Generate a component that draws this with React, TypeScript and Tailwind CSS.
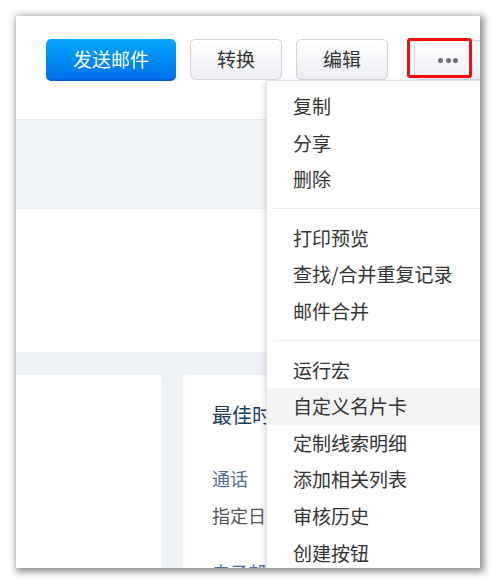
import React from "react";

const font = { fontFamily: '"Noto Sans CJK SC", "Noto Sans", sans-serif' };

function MenuItem({ label, active }: { label: string; active?: boolean }) {
  return (
    <div
      className={`h-[36.6px] flex items-center pl-[26px] text-[19px] text-[#333333] ${
        active ? "bg-[#f4f4f4]" : ""
      }`}
    >
      {label}
    </div>
  );
}

function Divider() {
  return <div className="mx-[6px] mt-[10px] mb-[11px] h-px bg-[#e8e8e8]" />;
}

export default function App() {
  return (
    <div className="w-[496px] h-[584px] bg-white p-4" style={font}>
      <div className="relative w-[464px] h-[552px] overflow-hidden bg-white shadow-[2px_2px_7px_2px_rgba(0,0,0,0.45)]">
        {/* header */}
        <div className="h-[103px] flex items-start pt-[23px] pl-[30px]">
          <button className="shrink-0 w-[130px] h-[42px] rounded-[5px] bg-gradient-to-b from-[#0ba6fc] to-[#0071ea] border-b-2 border-[#0062cc] text-white text-[19px] flex items-center justify-center">
            发送邮件
          </button>
          <button className="shrink-0 ml-[14px] w-[92px] h-[41px] rounded-[5px] bg-gradient-to-b from-[#ffffff] to-[#ebedf3] border border-[#cfd3db] text-[#333333] text-[19px] flex items-center justify-center">
            转换
          </button>
          <button className="shrink-0 ml-[14px] w-[92px] h-[41px] rounded-[5px] bg-gradient-to-b from-[#ffffff] to-[#ebedf3] border border-[#cfd3db] text-[#333333] text-[19px] flex items-center justify-center">
            编辑
          </button>
          <button className="shrink-0 ml-[26px] mt-px w-[80px] h-[40px] rounded-[5px] bg-gradient-to-b from-[#ffffff] to-[#ebedf3] border border-[#cfd3db] flex items-center pl-[23px] gap-[2.5px]">
            <span className="w-[5px] h-[5px] rounded-full bg-[#707070]" />
            <span className="w-[5px] h-[5px] rounded-full bg-[#707070]" />
            <span className="w-[5px] h-[5px] rounded-full bg-[#707070]" />
          </button>
        </div>
        {/* gray band */}
        <div className="h-[89px] bg-[#f1f4f7] border-t border-[#e6eaef]" />
        {/* white section */}
        <div className="h-[144px] bg-white border-t border-[#e9edf1]" />
        {/* cards area */}
        <div className="h-[300px] bg-[#eef2f6] pt-[23px] flex gap-[21px]">
          <div className="shrink-0 w-[146px] h-[300px] bg-white rounded-r-[5px]" />
          <div className="w-[280px] shrink-0 h-[300px] bg-white rounded-[5px] pl-[29px] pt-[25px]">
            <div className="text-[20px] text-[#1d3a5c] leading-[30px]">最佳时间</div>
            <div className="mt-[35px] text-[18px] text-[#4d6c98] leading-[26px]">通话</div>
            <div className="mt-[11px] text-[18px] text-[#555555] leading-[26px]">指定日期</div>
            <div className="mt-[31px] text-[18px] text-[#4d6c98] leading-[26px]">电子邮件</div>
          </div>
        </div>

        {/* dropdown menu */}
        <div className="absolute left-[250px] top-[64px] w-[230px] h-[500px] bg-white border border-[#e4e4e4] shadow-[-2px_2px_5px_rgba(0,0,0,0.12)] pt-[7px]">
          <MenuItem label="复制" />
          <MenuItem label="分享" />
          <MenuItem label="删除" />
          <Divider />
          <MenuItem label="打印预览" />
          <MenuItem label="查找/合并重复记录" />
          <MenuItem label="邮件合并" />
          <Divider />
          <MenuItem label="运行宏" />
          <MenuItem label="自定义名片卡" active />
          <MenuItem label="定制线索明细" />
          <MenuItem label="添加相关列表" />
          <MenuItem label="审核历史" />
          <MenuItem label="创建按钮" />
        </div>

        {/* red highlight */}
        <div className="absolute left-[391px] top-[22px] w-[65px] h-[40px] border-[3px] border-[#ff0a0a] rounded-[3px]" />
      </div>
    </div>
  );
}
